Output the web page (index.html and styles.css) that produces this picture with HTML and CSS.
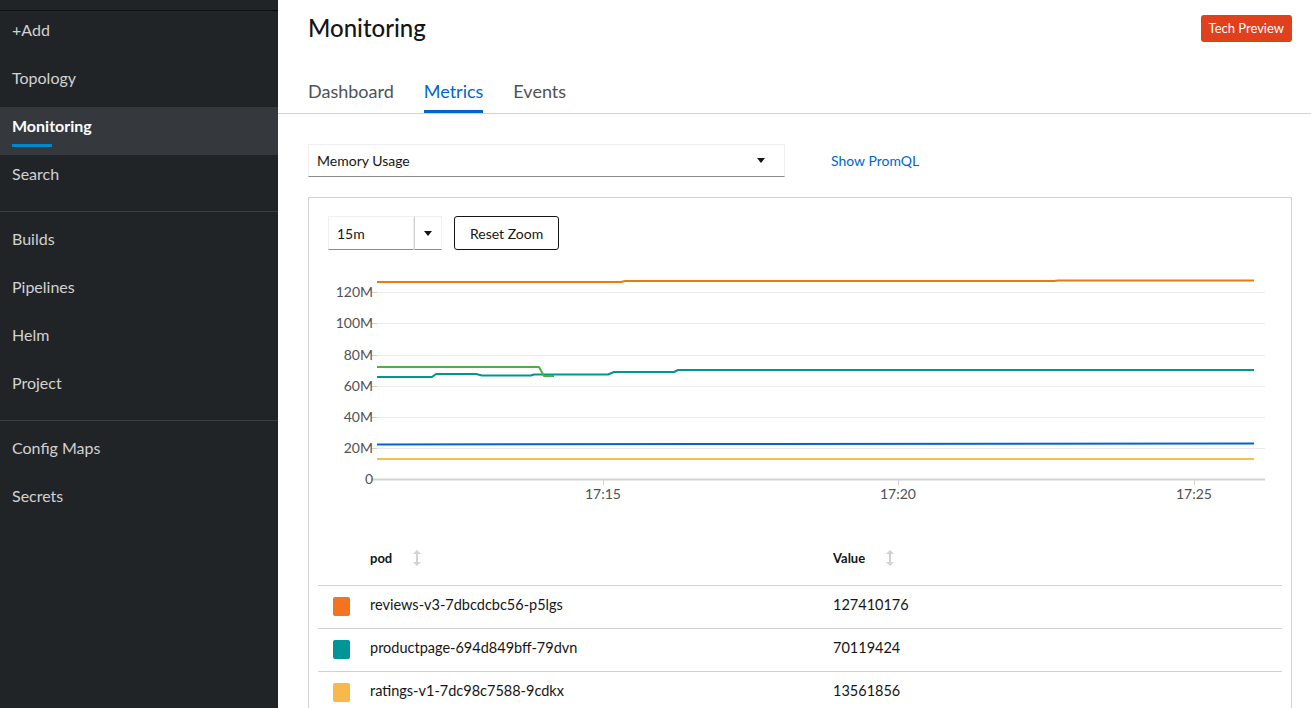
FILE: index.html
```html
<!DOCTYPE html>
<html>
<head>
<meta charset="utf-8">
<link rel="stylesheet" href="styles.css">
</head>
<body>
<div class="app">
  <nav class="sidebar">
    <div class="sidebar-top"></div>
    <ul class="nav">
      <li class="nav-item">+Add</li>
      <li class="nav-item">Topology</li>
      <li class="nav-item active">Monitoring</li>
      <li class="nav-item">Search</li>
    </ul>
    <div class="nav-divider"></div>
    <ul class="nav">
      <li class="nav-item">Builds</li>
      <li class="nav-item">Pipelines</li>
      <li class="nav-item">Helm</li>
      <li class="nav-item">Project</li>
    </ul>
    <div class="nav-divider"></div>
    <ul class="nav">
      <li class="nav-item">Config Maps</li>
      <li class="nav-item">Secrets</li>
    </ul>
  </nav>
  <main class="main">
    <header class="page-header">
      <h1 class="title">Monitoring</h1>
      <span class="badge">Tech Preview</span>
    </header>
    <div class="tabs">
      <span class="tab">Dashboard</span>
      <span class="tab active">Metrics</span>
      <span class="tab">Events</span>
    </div>
    <section class="content">
      <div class="query-row">
        <div class="select">
          <span>Memory Usage</span>
          <span class="caret"></span>
        </div>
        <a class="link">Show PromQL</a>
      </div>
      <div class="card">
        <div class="toolbar">
          <div class="span-select">
            <span class="span-input">15m</span>
            <span class="span-toggle"><span class="caret"></span></span>
          </div>
          <button class="btn">Reset Zoom</button>
        </div>
        <svg class="chart" width="965" height="250" viewBox="317 260 965 250" xmlns="http://www.w3.org/2000/svg">
          <g stroke="#ececec" stroke-width="1">
            <line x1="376" y1="292.5" x2="1264" y2="292.5"/>
            <line x1="376" y1="323.5" x2="1264" y2="323.5"/>
            <line x1="376" y1="355.5" x2="1264" y2="355.5"/>
            <line x1="376" y1="386.5" x2="1264" y2="386.5"/>
            <line x1="376" y1="417.5" x2="1264" y2="417.5"/>
            <line x1="376" y1="448.5" x2="1264" y2="448.5"/>
          </g>
          <g stroke="#d2d2d2" stroke-width="1">
            <line x1="370" y1="292.5" x2="376" y2="292.5"/>
            <line x1="370" y1="323.5" x2="376" y2="323.5"/>
            <line x1="370" y1="355.5" x2="376" y2="355.5"/>
            <line x1="370" y1="386.5" x2="376" y2="386.5"/>
            <line x1="370" y1="417.5" x2="376" y2="417.5"/>
            <line x1="370" y1="448.5" x2="376" y2="448.5"/>
            <line x1="370" y1="479.5" x2="1264" y2="479.5" stroke-width="2"/>
            <line x1="602.5" y1="479" x2="602.5" y2="485"/>
            <line x1="897.5" y1="479" x2="897.5" y2="485"/>
            <line x1="1193.5" y1="479" x2="1193.5" y2="485"/>
          </g>
          <g class="axis-label" text-anchor="end">
            <text x="372" y="297">120M</text>
            <text x="372" y="328">100M</text>
            <text x="372" y="360">80M</text>
            <text x="372" y="391">60M</text>
            <text x="372" y="422">40M</text>
            <text x="372" y="453">20M</text>
            <text x="372" y="484">0</text>
          </g>
          <g class="axis-label" text-anchor="middle">
            <text x="602" y="499">17:15</text>
            <text x="897" y="499">17:20</text>
            <text x="1193" y="499">17:25</text>
          </g>
          <g fill="none" stroke-width="2" stroke-linejoin="round">
            <path stroke="#f4c145" d="M376 459 L1253 459"/>
            <path stroke="#0066cc" d="M376 444.5 L700 444 L1253 443.5"/>
            <path stroke="#009596" d="M376 377 L431 377 L435 374 L475 374 L481 375.5 L530 375.5 L533 374.5 L607 374.5 L613 372 L673 372 L677 370 L1253 370"/>
            <path stroke="#4cb140" d="M376 367 L538 367 L543 376 L553 376"/>
            <path stroke="#ec7a08" d="M376 282 L620 282 L624 281 L1053 281 L1057 280.5 L1253 280.5"/>
          </g>
        </svg>
        <table class="table">
          <thead>
            <tr>
              <th class="swatch-col"></th>
              <th class="pod-col">pod <svg class="sort" width="8" height="16" viewBox="0 0 8 16"><path d="M4 0 L8 4 L5 4 L5 12 L8 12 L4 16 L0 12 L3 12 L3 4 L0 4 Z" fill="#d2d2d2"/></svg></th>
              <th>Value <svg class="sort" width="8" height="16" viewBox="0 0 8 16"><path d="M4 0 L8 4 L5 4 L5 12 L8 12 L4 16 L0 12 L3 12 L3 4 L0 4 Z" fill="#d2d2d2"/></svg></th>
            </tr>
          </thead>
          <tbody>
            <tr>
              <td class="swatch-col"><span class="swatch orange"></span></td>
              <td>reviews-v3-7dbcdcbc56-p5lgs</td>
              <td>127410176</td>
            </tr>
            <tr>
              <td class="swatch-col"><span class="swatch teal"></span></td>
              <td>productpage-694d849bff-79dvn</td>
              <td>70119424</td>
            </tr>
            <tr>
              <td class="swatch-col"><span class="swatch gold"></span></td>
              <td>ratings-v1-7dc98c7588-9cdkx</td>
              <td>13561856</td>
            </tr>
          </tbody>
        </table>
      </div>
    </section>
  </main>
</div>
</body>
</html>
```
FILE: styles.css
```css
* { box-sizing: border-box; }
html, body { margin: 0; padding: 0; height: 100%; overflow: hidden; }
body {
  font-family: "Lato", "Liberation Sans", sans-serif;
  color: #151515;
  background: #fff;
}
.app { display: flex; height: 708px; }

.sidebar {
  width: 278px;
  flex: none;
  background: #212427;
  color: #d2d2d2;
}
.sidebar-top { height: 11px; border-bottom: 1px solid #0c0d0e; }
.nav { list-style: none; margin: 0; padding: 0; }
.nav-item {
  position: relative;
  height: 48px;
  padding: 7px 12px 17px;
  font-size: 16px;
  line-height: 24px;
}
.nav-item.active { background: #35393d; color: #fff; font-weight: 700; }
.nav-item.active::after {
  content: "";
  position: absolute;
  left: 12px;
  top: 37px;
  width: 40px;
  height: 3px;
  background: #0088ce;
}
.nav-divider { height: 1px; background: #3c3f42; margin: 8px 0; }

.main { flex: 1; min-width: 0; }
.page-header {
  display: flex;
  justify-content: space-between;
  align-items: flex-start;
  padding: 14px 19px 0 30px;
}
.title {
  margin: 0;
  font-size: 24px;
  line-height: 28px;
  font-weight: 500;
  color: #151515;
}
.badge {
  margin-top: 1px;
  background: #e0401c;
  color: #fff;
  font-size: 13px;
  line-height: 27px;
  padding: 0 8px;
  border-radius: 3px;
}
.tabs {
  display: flex;
  gap: 30px;
  margin-top: 29px;
  padding-left: 30px;
  border-bottom: 1px solid #d2d2d2;
}
.tab {
  padding: 8px 0 10px;
  font-size: 18px;
  line-height: 24px;
  color: #4f5255;
}
.tab.active { color: #0066cc; box-shadow: inset 0 -3px 0 #0066cc; }

.content { padding: 30px 19px 0 30px; }
.query-row { display: flex; align-items: center; }
.select {
  width: 477px;
  height: 33px;
  display: flex;
  align-items: center;
  justify-content: space-between;
  padding: 0 19px 0 8px;
  border: 1px solid #f0f0f0;
  border-bottom-color: #8a8d90;
  font-size: 14px;
}
.caret {
  width: 0; height: 0;
  border-left: 4.5px solid transparent;
  border-right: 4.5px solid transparent;
  border-top: 5px solid #151515;
}
.link { margin-left: 46px; color: #0066cc; font-size: 14px; }

.card {
  margin-top: 20px;
  border: 1px solid #d2d2d2;
  border-bottom: none;
  padding: 18px 9px 0;
}
.toolbar { display: flex; gap: 12px; margin-left: 10px; }
.span-select { display: flex; height: 34px; }
.span-input {
  width: 86px;
  display: flex;
  align-items: center;
  padding-left: 8px;
  font-size: 14px;
  border: 1px solid #f0f0f0;
  border-bottom-color: #8a8d90;
}
.span-toggle {
  width: 28px;
  display: flex;
  align-items: center;
  justify-content: center;
  border: 1px solid #f0f0f0;
  border-left: 1px solid #d2d2d2;
  border-bottom-color: #8a8d90;
}
.btn {
  height: 34px;
  padding: 0 15px;
  border: 1px solid #151515;
  border-radius: 3px;
  background: #fff;
  font-family: inherit;
  font-size: 14px;
  color: #151515;
}
.chart { display: block; margin-top: 10px; }
.axis-label text { font-size: 14px; fill: #4f5255; font-family: "Lato", "Liberation Sans", sans-serif; }

.table { width: 100%; border-collapse: collapse; margin-top: 21px; font-size: 14.5px; }
.table th {
  text-align: left;
  font-size: 13px;
  font-weight: 700;
  height: 54px;
  padding: 0;
  border-bottom: 1px solid #d2d2d2;
}
.table td {
  height: 43px;
  padding: 0 0 4px;
  border-bottom: 1px solid #d2d2d2;
}
.swatch-col { width: 52px; padding-left: 15px !important; }
.table td.swatch-col { padding-bottom: 0; }
.pod-col { width: 463px; }
.sort { vertical-align: -3px; margin-left: 18px; }
.swatch { display: block; width: 17px; height: 19px; border-radius: 2px; }
.swatch.orange { background: #f37321; }
.swatch.teal { background: #009596; }
.swatch.gold { background: #f9b94a; }
```
